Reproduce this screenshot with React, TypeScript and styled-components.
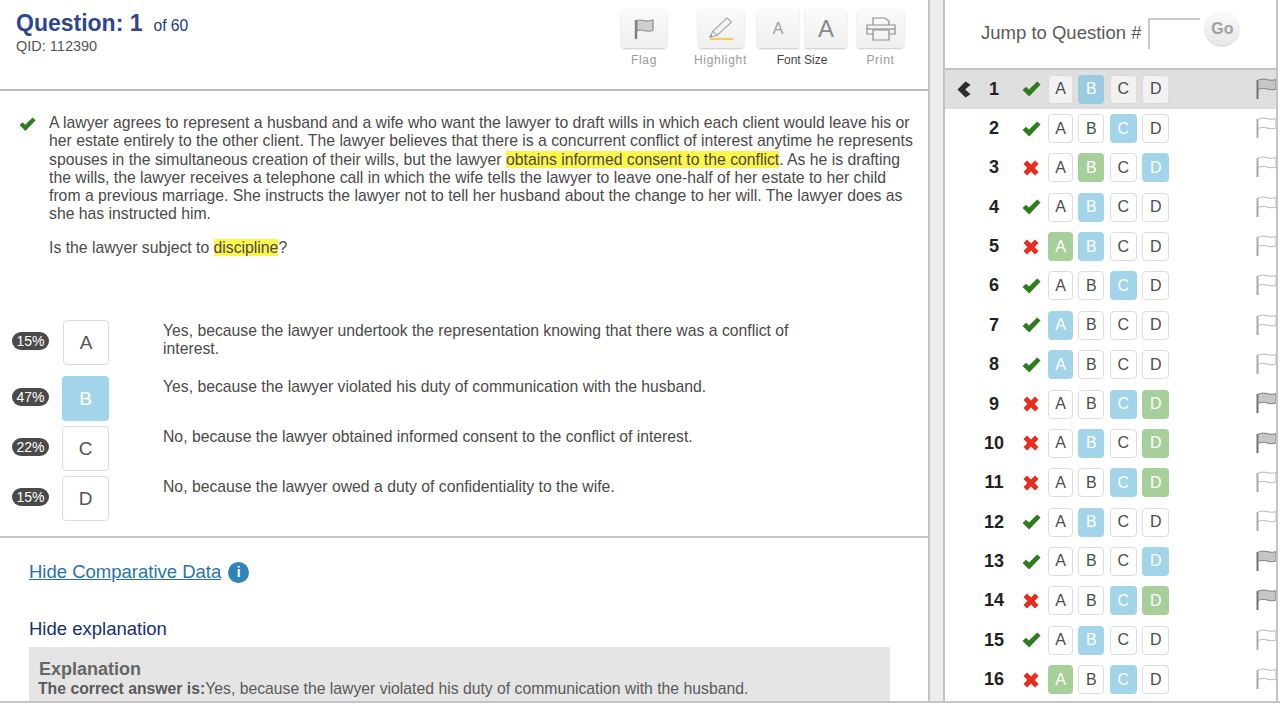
import React from "react";
import styled, { createGlobalStyle } from "styled-components";

const GlobalStyle = createGlobalStyle`
  html, body {
    margin: 0;
    padding: 0;
    height: 703px;
    overflow: hidden;
    background: #fff;
    font-family: "Liberation Sans", Arial, sans-serif;
    color: #4a4a4a;
  }
`;

const Page = styled.div`
  display: flex;
  width: 1280px;
  height: 703px;
  overflow: hidden;
  box-sizing: border-box;
  border-bottom: 2px solid #c4c4c4;
`;

const Main = styled.main`
  width: 928px;
  flex-shrink: 0;
  overflow: hidden;
  border-right: 2px solid #c4c4c4;
`;

const Gutter = styled.div`
  width: 13px;
  flex-shrink: 0;
  background: #ececec;
`;

const Side = styled.aside`
  width: 335px;
  flex-shrink: 0;
  border-left: 2px solid #c4c4c4;
  border-right: 2px solid #c4c4c4;
  box-sizing: border-box;
  overflow: hidden;
`;

const Header = styled.header`
  height: 91px;
  box-sizing: border-box;
  border-bottom: 2px solid #bcbcbc;
  display: flex;
  justify-content: space-between;
  padding: 9px 24px 0 16px;
`;

const TitleBlock = styled.div`
  display: flex;
  flex-direction: column;
  padding-top: 1px;
`;

const Title = styled.h1`
  margin: 0;
  font-size: 23px;
  line-height: 26px;
  font-weight: 700;
  color: #30468d;
`;

const OfCount = styled.span`
  font-size: 15.6px;
  font-weight: 400;
  color: #1d3a80;
  margin-left: 11px;
`;

const Qid = styled.div`
  font-size: 14.5px;
  line-height: 15px;
  color: #555;
`;

const Tools = styled.div`
  display: flex;
  align-items: flex-start;
`;

const ToolGroup = styled.div<{ $gap: number }>`
  display: flex;
  flex-direction: column;
  align-items: center;
  margin-right: ${(p) => p.$gap}px;
`;

const ToolButtons = styled.div`
  display: flex;
  gap: 6px;
`;

const ToolButton = styled.div<{ $w: number; $side?: "l" | "r" }>`
  width: ${(p) => p.$w}px;
  height: 39px;
  box-sizing: border-box;
  display: flex;
  align-items: center;
  justify-content: center;
  background: linear-gradient(#fbfbfb, #efefef);
  border-radius: ${(p) =>
    p.$side === "l" ? "4px 0 0 4px" : p.$side === "r" ? "0 4px 4px 0" : "4px"};
  box-shadow: 0 1px 2px rgba(0, 0, 0, 0.22);
`;

const ToolLabel = styled.div<{ $dark?: boolean }>`
  margin-top: 5px;
  font-size: 12px;
  line-height: 14px;
  letter-spacing: ${(p) => (p.$dark ? "0" : "0.7px")};
  color: ${(p) => (p.$dark ? "#444" : "#9a9a9a")};
`;

const SizeLetter = styled.span<{ $size: number; $tone: string }>`
  font-size: ${(p) => p.$size}px;
  color: ${(p) => p.$tone};
`;

const Stem = styled.section`
  position: relative;
  padding: 23px 12px 0 49px;
  height: 196px;
  box-sizing: border-box;
`;

const StemMark = styled.span`
  position: absolute;
  left: 19px;
  top: 26px;
  line-height: 0;
`;

const Paragraph = styled.p`
  margin: 0 0 15px;
  font-size: 15.75px;
  line-height: 18.3px;
  color: #4a4a4a;
`;

const Marked = styled.mark`
  background: #fcf64a;
  color: inherit;
`;

const Choices = styled.section`
  height: 251px;
  box-sizing: border-box;
  padding-top: 33px;
  border-bottom: 2px solid #c4c4c4;
`;

const ChoiceRow = styled.div<{ $h: number }>`
  display: flex;
  height: ${(p) => p.$h}px;
  align-items: flex-start;
`;

const Pct = styled.span`
  width: 37px;
  height: 18px;
  margin: 12px 0 0 12px;
  flex-shrink: 0;
  border-radius: 9px;
  background: #4a4a4a;
  color: #fff;
  font-size: 14px;
  line-height: 18px;
  text-align: center;
`;

const ChoiceBox = styled.div<{ $on?: boolean; $x: number }>`
  width: ${(p) => 47 - p.$x}px;
  height: 45px;
  margin-left: ${(p) => 13 + p.$x}px;
  flex-shrink: 0;
  box-sizing: border-box;
  border-radius: 4px;
  border: ${(p) => (p.$on ? "none" : "1px solid #dcdcdc")};
  background: ${(p) => (p.$on ? "#a3d5ea" : "#fff")};
  color: ${(p) => (p.$on ? "#fff" : "#555")};
  font-size: 19px;
  display: flex;
  align-items: center;
  justify-content: center;
`;

const ChoiceText = styled.div`
  margin-left: 54px;
  width: 650px;
  font-size: 15.75px;
  line-height: 18.3px;
  color: #4a4a4a;
  margin-top: 2px;
`;

const Footer = styled.section`
  padding: 23px 38px 0 29px;
`;

const DataLink = styled.div`
  display: flex;
  align-items: center;
  gap: 7px;
  height: 22px;
`;

const LinkText = styled.a`
  font-size: 18.5px;
  color: #2a72ae;
  text-decoration: underline;
`;

const InfoDot = styled.span`
  width: 21px;
  height: 21px;
  border-radius: 50%;
  background: #2f84bb;
  color: #fff;
  font-weight: 700;
  font-size: 14px;
  line-height: 21px;
  text-align: center;
`;

const HideLink = styled.div`
  margin-top: 35px;
  font-size: 18.5px;
  line-height: 22px;
  color: #16306f;
`;

const ExplainBox = styled.div`
  margin-top: 7px;
  height: 60px;
  background: #e5e5e5;
  padding: 12px 0 0 10px;
  box-sizing: border-box;
  color: #5a5a5a;
`;

const ExplainHead = styled.div`
  font-size: 18px;
  line-height: 20px;
  font-weight: 700;
  color: #666;
`;

const ExplainBody = styled.div`
  margin-left: -1px;
  font-size: 15.75px;
  line-height: 20px;
`;

const Jump = styled.div`
  height: 69.5px;
  box-sizing: border-box;
  border-bottom: 2px solid #c4c4c4;
  display: flex;
  align-items: flex-start;
  padding: 12px 0 0 36px;
`;

const JumpLabel = styled.span`
  font-size: 18.5px;
  line-height: 20px;
  margin-top: 11px;
  color: #5a5a5a;
`;

const JumpInput = styled.div`
  width: 52px;
  height: 31px;
  margin: 6px 0 0 7px;
  box-sizing: border-box;
  border-top: 2px solid #c9c9c9;
  border-left: 2px solid #c9c9c9;
`;

const GoButton = styled.div`
  width: 34px;
  height: 33px;
  margin-left: 5px;
  border-radius: 50%;
  background: linear-gradient(#fafafa, #e8e8e8);
  box-shadow: 0 1px 2px rgba(0, 0, 0, 0.25);
  color: #a0a0a0;
  font-size: 16px;
  font-weight: 700;
  line-height: 33px;
  text-align: center;
`;

const Row = styled.div<{ $current?: boolean }>`
  height: 39.36px;
  display: flex;
  align-items: center;
  position: relative;
  background: ${(p) => (p.$current ? "#dfdfdf" : "transparent")};
`;

const Arrow = styled.span`
  position: absolute;
  left: 12px;
  top: 11px;
  line-height: 0;
`;

const Num = styled.span`
  width: 40px;
  margin-left: 29px;
  text-align: center;
  font-size: 18px;
  font-weight: 700;
  color: #222;
`;

const Mark = styled.span`
  width: 20px;
  margin-left: 7px;
  display: flex;
  justify-content: center;
  line-height: 0;
`;

const Letters = styled.div`
  display: flex;
  margin-left: 7px;
  gap: 5.4px;
`;

type Tone = "none" | "blue" | "green";

const Letter = styled.span<{ $tone: Tone; $current?: boolean; $w: number }>`
  width: ${(p) => p.$w}px;
  height: 29px;
  box-sizing: border-box;
  border-radius: 4px;
  font-size: 16px;
  display: flex;
  align-items: center;
  justify-content: center;
  border: ${(p) => (p.$tone === "none" ? "1px solid #dcdcdc" : "none")};
  background: ${(p) =>
    p.$tone === "blue"
      ? p.$current
        ? "#9bcbe0"
        : "#a3d5ea"
      : p.$tone === "green"
        ? "#a6cf9a"
        : p.$current
          ? "#f2f2f2"
          : "#fff"};
  color: ${(p) => (p.$tone === "none" ? "#4d4d4d" : "#fff")};
`;

const RowFlag = styled.span`
  position: absolute;
  right: 0;
  top: 8px;
  line-height: 0;
`;

const Check = ({ size = 19 }: { size?: number }) => (
  <svg width={size} height={size * 0.84} viewBox="0 0 19 16">
    <path d="M0.5 9 L4 5.8 L7 8.6 L15.2 0.5 L18.6 3.6 L7.2 15.6 Z" fill="#2d7d1e" />
  </svg>
);

const Cross = () => (
  <svg width="16" height="16" viewBox="0 0 16 16">
    <path
      d="M0.5 4 L4 0.5 L8 4.4 L12 0.5 L15.5 4 L11.6 8 L15.5 12 L12 15.5 L8 11.6 L4 15.5 L0.5 12 L4.4 8 Z"
      fill="#ea2c1e"
    />
  </svg>
);

const Chevron = () => (
  <svg width="14" height="17" viewBox="0 0 14 17">
    <path d="M8.5 0.5 L13.5 3.8 L8.2 8.5 L13.5 13.2 L8.5 16.5 L0.5 8.5 Z" fill="#2b2b2b" />
  </svg>
);

const SmallFlag = ({ filled }: { filled: boolean }) => (
  <svg width="20" height="22" viewBox="0 0 20 22">
    <path d="M1.5 21 V2" stroke={filled ? "#6f6f6f" : "#a6a6a6"} strokeWidth="2" fill="none" />
    <path
      d="M2 2.2 C6 0.6 9 1 12 1.8 C15 2.6 18 2.2 20 1.6 V11 C17 12 14 12 11 11 C8 10 5 10.2 2 11.5 Z"
      fill={filled ? "#c6c6c6" : "#fff"}
      stroke={filled ? "#7e7e7e" : "#b4b4b4"}
      strokeWidth="1"
    />
  </svg>
);

const FlagIcon = () => (
  <svg width="20" height="22" viewBox="0 0 20 22">
    <path d="M2 21 V2" stroke="#7d7d7d" strokeWidth="2.4" />
    <path
      d="M3 2.5 C7 1 10 3 13 3 C15 3 17 2.5 19 2 V12.5 C16 13.5 13 13.5 10 12.5 C7 11.5 5 12 3 13 Z"
      fill="#cfcfcf"
      stroke="#8c8c8c"
      strokeWidth="1.2"
    />
  </svg>
);

const PencilIcon = () => (
  <svg width="24" height="24" viewBox="0 0 24 24" fill="none">
    <path d="M1 20 L4 14 L18 1 L22.5 5 L8 18.5 Z" stroke="#a3a3a3" strokeWidth="1.1" />
    <path d="M4 14 L8 18.5" stroke="#a3a3a3" strokeWidth="1.1" />
    <path d="M1 20 L3 20 L2.4 17.6 Z" fill="#777" />
    <path d="M1 22 H24" stroke="#f6cf4e" strokeWidth="2.2" />
  </svg>
);

const PrintIcon = () => (
  <svg width="30" height="24" viewBox="0 0 30 24" fill="none" stroke="#8e8e8e" strokeWidth="1.2">
    <path d="M7 8 V1 H19 L23 4 V8" />
    <path d="M7 17 H1 V8 H29 V17 H23" />
    <path d="M1 12 H29" />
    <path d="M7 13 H23 V23 H7 Z" fill="#f4f4f4" />
  </svg>
);

const rows: { n: number; ok: boolean; blue: string; green?: string; flag?: boolean }[] = [
  { n: 1, ok: true, blue: "B", flag: true },
  { n: 2, ok: true, blue: "C" },
  { n: 3, ok: false, blue: "D", green: "B" },
  { n: 4, ok: true, blue: "B" },
  { n: 5, ok: false, blue: "B", green: "A" },
  { n: 6, ok: true, blue: "C" },
  { n: 7, ok: true, blue: "A" },
  { n: 8, ok: true, blue: "A" },
  { n: 9, ok: false, blue: "C", green: "D", flag: true },
  { n: 10, ok: false, blue: "B", green: "D", flag: true },
  { n: 11, ok: false, blue: "C", green: "D" },
  { n: 12, ok: true, blue: "B" },
  { n: 13, ok: true, blue: "D", flag: true },
  { n: 14, ok: false, blue: "C", green: "D", flag: true },
  { n: 15, ok: true, blue: "B" },
  { n: 16, ok: false, blue: "C", green: "A" },
];

const letterWidths: [string, number][] = [
  ["A", 25],
  ["B", 26],
  ["C", 27],
  ["D", 27],
];

const choices = [
  {
    pct: "15%",
    letter: "A",
    h: 56,
    x: 1,
    text: "Yes, because the lawyer undertook the representation knowing that there was a conflict of interest.",
  },
  {
    pct: "47%",
    letter: "B",
    h: 50,
    x: 0,
    on: true,
    text: "Yes, because the lawyer violated his duty of communication with the husband.",
  },
  {
    pct: "22%",
    letter: "C",
    h: 50,
    x: 0,
    text: "No, because the lawyer obtained informed consent to the conflict of interest.",
  },
  {
    pct: "15%",
    letter: "D",
    h: 50,
    x: 0,
    text: "No, because the lawyer owed a duty of confidentiality to the wife.",
  },
];

export default function App() {
  return (
    <Page>
      <GlobalStyle />
      <Main>
        <Header>
          <TitleBlock>
            <Title>
              Question: 1<OfCount>of 60</OfCount>
            </Title>
            <Qid>QID: 112390</Qid>
          </TitleBlock>
          <Tools>
            <ToolGroup $gap={27}>
              <ToolButton $w={46}>
                <FlagIcon />
              </ToolButton>
              <ToolLabel>Flag</ToolLabel>
            </ToolGroup>
            <ToolGroup $gap={10}>
              <ToolButton $w={46}>
                <PencilIcon />
              </ToolButton>
              <ToolLabel>Highlight</ToolLabel>
            </ToolGroup>
            <ToolGroup $gap={10}>
              <ToolButtons>
                <ToolButton $w={42} $side="l">
                  <SizeLetter $size={16} $tone="#a0a0a0">
                    A
                  </SizeLetter>
                </ToolButton>
                <ToolButton $w={42} $side="r">
                  <SizeLetter $size={24} $tone="#8a8a8a">
                    A
                  </SizeLetter>
                </ToolButton>
              </ToolButtons>
              <ToolLabel $dark>Font Size</ToolLabel>
            </ToolGroup>
            <ToolGroup $gap={0}>
              <ToolButton $w={47}>
                <PrintIcon />
              </ToolButton>
              <ToolLabel>Print</ToolLabel>
            </ToolGroup>
          </Tools>
        </Header>
        <Stem>
          <StemMark>
            <Check size={17} />
          </StemMark>
          <Paragraph>
            A lawyer agrees to represent a husband and a wife who want the lawyer to draft wills in
            which each client would leave his or her estate entirely to the other client. The lawyer
            believes that there is a concurrent conflict of interest anytime he represents spouses in
            the simultaneous creation of their wills, but the lawyer{" "}
            <Marked>obtains informed consent to the conflict</Marked>. As he is drafting the wills,
            the lawyer receives a telephone call in which the wife tells the lawyer to leave one-half
            of her estate to her child from a previous marriage. She instructs the lawyer not to tell
            her husband about the change to her will. The lawyer does as she has instructed him.
          </Paragraph>
          <Paragraph>
            Is the lawyer subject to <Marked>discipline</Marked>?
          </Paragraph>
        </Stem>
        <Choices>
          {choices.map((c) => (
            <ChoiceRow key={c.letter} $h={c.h}>
              <Pct>{c.pct}</Pct>
              <ChoiceBox $on={c.on} $x={c.x}>
                {c.letter}
              </ChoiceBox>
              <ChoiceText>{c.text}</ChoiceText>
            </ChoiceRow>
          ))}
        </Choices>
        <Footer>
          <DataLink>
            <LinkText>Hide Comparative Data</LinkText>
            <InfoDot>i</InfoDot>
          </DataLink>
          <HideLink>Hide explanation</HideLink>
          <ExplainBox>
            <ExplainHead>Explanation</ExplainHead>
            <ExplainBody>
              <b>The correct answer is:</b>Yes, because the lawyer violated his duty of communication
              with the husband.
            </ExplainBody>
          </ExplainBox>
        </Footer>
      </Main>
      <Gutter />
      <Side>
        <Jump>
          <JumpLabel>Jump to Question #</JumpLabel>
          <JumpInput />
          <GoButton>Go</GoButton>
        </Jump>
        {rows.map((r, i) => (
          <Row key={r.n} $current={i === 0}>
            {i === 0 && (
              <Arrow>
                <Chevron />
              </Arrow>
            )}
            <Num>{r.n}</Num>
            <Mark>{r.ok ? <Check /> : <Cross />}</Mark>
            <Letters>
              {letterWidths.map(([l, w]) => (
                <Letter
                  key={l}
                  $w={w}
                  $current={i === 0}
                  $tone={r.blue === l ? "blue" : r.green === l ? "green" : "none"}
                >
                  {l}
                </Letter>
              ))}
            </Letters>
            <RowFlag>
              <SmallFlag filled={!!r.flag} />
            </RowFlag>
          </Row>
        ))}
      </Side>
    </Page>
  );
}
